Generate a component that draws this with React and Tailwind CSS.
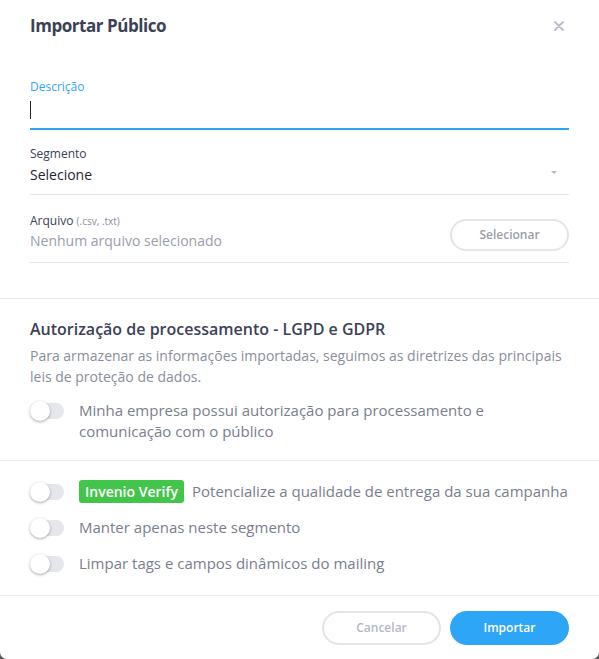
import React from "react";

function Toggle() {
  return (
    <div className="relative w-[34px] h-[20px] shrink-0">
      <div className="absolute left-[4px] top-[2px] w-[30px] h-[16px] rounded-full bg-[#e6e7ec]" />
      <div className="absolute left-0 top-0 w-[20px] h-[20px] rounded-full bg-white shadow-[0_1px_3px_rgba(0,0,0,0.35)]" />
    </div>
  );
}

export default function App() {
  return (
    <div className="w-[599px] h-[659px] bg-[#5a5a5a]" style={{ fontFamily: '"Open Sans", sans-serif' }}>
      <div className="w-[599px] h-[659px] bg-white rounded-b-[7px] flex flex-col">
        <div className="flex items-center justify-between px-[30px] pt-[7px] h-[45px]">
          <h1 className="text-[17px] font-bold text-[#3b4257] tracking-[-0.45px]">Importar Público</h1>
          <svg width="10" height="10" viewBox="0 0 10 10" className="mr-[5px]">
            <path d="M1 1 L9 9 M9 1 L1 9" stroke="#b9bcc7" strokeWidth="1.8" strokeLinecap="round" />
          </svg>
        </div>

        <div className="px-[30px] pt-[34px]">
          <div className="text-[12px] text-[#2ea6f8] leading-[16px]">Descrição</div>
          <div className="h-[35px] border-b-2 border-[#2ea6f8] flex items-center">
            <div className="w-[1px] h-[18px] bg-[#1f2433] -mt-[4px]" />
          </div>

          <div className="mt-[16px] text-[12px] text-[#3b4257] leading-[16px]">Segmento</div>
          <div className="h-[33px] border-b border-[#e4e5ea] flex items-center justify-between">
            <span className="text-[14px] text-[#1f2433] -mt-[8px]">Selecione</span>
            <span className="w-0 h-0 border-l-[3px] border-r-[3px] border-t-[3px] border-l-transparent border-r-transparent border-t-[#b5b8c4] mr-[12px] -mt-[12px]" />
          </div>

          <div className="flex items-end justify-between border-b border-[#e4e5ea] pb-[11px] pt-[18px]">
            <div>
              <div className="text-[12px] text-[#3b4257] leading-[16px]">
                Arquivo <span className="text-[10px] text-[#8a8e9c]">(.csv, .txt)</span>
              </div>
              <div className="text-[14px] text-[#9a9dab] mt-[1px]">Nenhum arquivo selecionado</div>
            </div>
            <button className="w-[119px] h-[32px] rounded-full border-2 border-[#e4e5ea] text-[12px] font-semibold text-[#9a9dab]">
              Selecionar
            </button>
          </div>
        </div>

        <div className="mt-[35px] border-t border-[#e8e9ee]" />

        <div className="px-[30px] pt-[19px] pb-[18px]">
          <h2 className="text-[16px] font-semibold text-[#3b4257] leading-[22px]">Autorização de processamento - LGPD e GDPR</h2>
          <p className="mt-[5px] text-[14px] leading-[21px] text-[#8a8e9c]">
            Para armazenar as informações importadas, seguimos as diretrizes das principais leis de proteção de dados.
          </p>
          <div className="flex items-start gap-[15px] mt-[13px]">
            <div className="mt-[1px]"><Toggle /></div>
            <div className="text-[15px] leading-[21px] text-[#7a7e8e]">
              Minha empresa possui autorização para processamento e<br />comunicação com o público
            </div>
          </div>
        </div>

        <div className="border-t border-[#e8e9ee]" />

        <div className="px-[30px] pt-[20px] pb-[21px] flex flex-col gap-[15px]">
          <div className="flex items-center gap-[15px] h-[21px]">
            <Toggle />
            <div className="flex items-center gap-[8px]">
              <span className="bg-[#43c44b] text-white text-[14px] font-semibold px-[6px] rounded-[3px] leading-[23px]">Invenio Verify</span>
              <span className="text-[15px] text-[#7a7e8e]">Potencialize a qualidade de entrega da sua campanha</span>
            </div>
          </div>
          <div className="flex items-center gap-[15px] h-[21px]">
            <Toggle />
            <span className="text-[15px] text-[#7a7e8e]">Manter apenas neste segmento</span>
          </div>
          <div className="flex items-center gap-[15px] h-[21px]">
            <Toggle />
            <span className="text-[15px] text-[#7a7e8e]">Limpar tags e campos dinâmicos do mailing</span>
          </div>
        </div>

        <div className="border-t border-[#e8e9ee]" />

        <div className="flex justify-end gap-[9px] px-[30px] pt-[15px]">
          <button className="w-[119px] h-[34px] rounded-full border-2 border-[#e4e5ea] text-[12px] font-semibold text-[#b5b8c4]">
            Cancelar
          </button>
          <button className="w-[119px] h-[34px] rounded-full bg-[#2ea6f8] text-[12px] font-semibold text-white">
            Importar
          </button>
        </div>
      </div>
    </div>
  );
}
